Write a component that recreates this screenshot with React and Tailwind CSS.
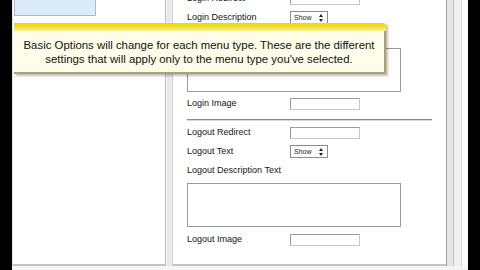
import React from 'react';

const font = "font-['Liberation_Sans',Arial,sans-serif]";

function TextBox() {
  return <div className="h-[12px] w-[70px] border border-[#9a9a9a] border-r-[#c8c8c8] border-b-[#c8c8c8] bg-white" />;
}

function ShowSelect() {
  return (
    <div className="flex h-[13px] w-[38px] items-center justify-between border border-[#8c8c8c] bg-white pl-[3px] pr-[4px]">
      <span className="text-[7px] leading-none text-[#222]">Show</span>
      <svg width="4" height="8" viewBox="0 0 4 8">
        <path d="M0 3 L2 0 L4 3 Z M0 5 L2 8 L4 5 Z" fill="#222" />
      </svg>
    </div>
  );
}

function Row({ label, children }) {
  return (
    <div className="flex h-[19px] items-center">
      <span className="w-[103px] shrink-0 text-[9px] text-[#141414]">{label}</span>
      {children}
    </div>
  );
}

export default function App() {
  return (
    <div className={`relative flex h-[270px] w-[480px] overflow-hidden bg-black ${font}`}>
      <div className="w-[12px] shrink-0 bg-black" />

      <div className="flex w-[456px] shrink-0 flex-col bg-[#f3f3f3]">
        <div className="flex h-[266px]">
          {/* Left panel */}
          <div className="w-[154px] shrink-0 border-l border-r border-b-2 border-l-[#e4e4e4] border-r-[#bdbdbd] border-b-[#c4c4c4] bg-white pl-[1px]">
            <div className="h-[16px] w-[82px] border border-t-0 border-[#a9bdd2] bg-[#dcebfa]" />
          </div>

          {/* Gap */}
          <div className="flex w-[6px] shrink-0 bg-[#ececec]">
            <div className="w-[1px] bg-[#f8f8f8]" />
            <div className="w-[3px] bg-[#e6e6e6]" />
          </div>

          {/* Right panel */}
          <div className="w-[274px] shrink-0 overflow-hidden border-l border-b-2 border-l-[#d0d0d0] border-b-[#c4c4c4] bg-white pl-[14px]">
            <div className="mt-[-11px] flex flex-col">
              <Row label="Login Redirect"><TextBox /></Row>
              <Row label="Login Description"><ShowSelect /></Row>
              <Row label="Login Description Text" />
              <div className="mt-[2px] h-[44px] w-[214px] border border-[#9a9a9a] bg-white" />
              <div className="mt-[2px]">
                <Row label="Login Image"><TextBox /></Row>
              </div>
              <div className="mt-[6px] h-[2px] w-[245px] border-t border-b border-t-[#8a8a8a] border-b-[#d8d8d8]" />
              <div className="mt-[2px]">
                <Row label="Logout Redirect"><TextBox /></Row>
              </div>
              <Row label="Logout Text"><ShowSelect /></Row>
              <Row label="Logout Description Text" />
              <div className="mt-[3px] h-[44px] w-[214px] border border-[#9a9a9a] bg-white" />
              <div className="mt-[3px]">
                <Row label="Logout Image"><TextBox /></Row>
              </div>
            </div>
          </div>

          {/* Scroll area */}
          <div className="flex w-[22px] shrink-0">
            <div className="w-[1px] bg-[#9c9c9c]" />
            <div className="w-[6px] bg-[#e6e6e6]" />
            <div className="w-[1px] bg-[#c4c4c4]" />
            <div className="w-[7px] bg-[#f0f0f0]" />
            <div className="w-[1px] bg-[#d4d4d4]" />
            <div className="w-[6px] bg-[#fbfbfb]" />
          </div>
        </div>
        <div className="flex-1 bg-[#f5f5f5]" />
      </div>

      <div className="w-[12px] shrink-0 bg-black" />

      {/* Tooltip */}
      <div className="absolute left-[14px] top-[23px] w-[372px] shadow-[2px_2px_2px_rgba(0,0,0,0.25)]">
        <div className="h-[8px] rounded-tr-[3px] bg-gradient-to-b from-[#ead600] via-[#efe02a] to-[#f6ef9c]" />
        <div className="flex h-[43px] flex-col items-center justify-center border-r-2 border-b-2 border-[#aaa270] bg-[#fffdea] text-[11.4px] leading-[14px] text-[#111]">
          <span>Basic Options will change for each menu type. These are the different</span>
          <span>settings that will apply only to the menu type you've selected.</span>
        </div>
      </div>
    </div>
  );
}
